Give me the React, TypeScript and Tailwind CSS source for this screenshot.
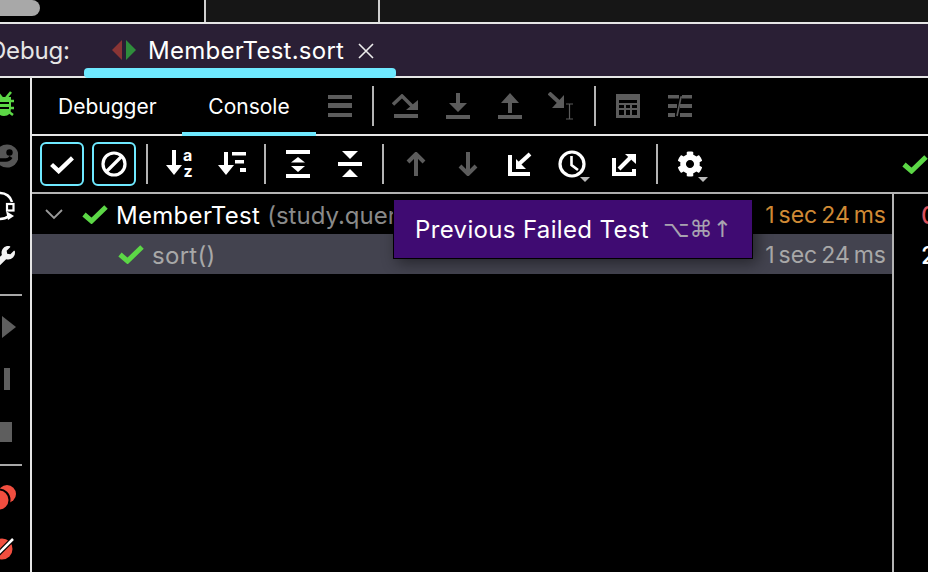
import { FaCog, FaWrench } from 'react-icons/fa';

const GRAY = '#5c5c5c';

function Divider({ className = 'ml-[6px]' }: { className?: string }) {
  return <div className={`h-[40px] w-[2px] shrink-0 bg-[#b4b4b4] ${className}`} />;
}

function Cell({ className = '', children }: { className?: string; children: React.ReactNode }) {
  return <div className={`relative flex h-[52px] w-[52px] shrink-0 items-center justify-center ${className}`}>{children}</div>;
}

function Check({ className = '' }: { className?: string }) {
  return (
    <svg viewBox="0 0 26 20" className={`h-[20px] w-[26px] shrink-0 ${className}`}>
      <path d="M2 10.5 L9.5 17 L24 3" fill="none" stroke="#5cd746" strokeWidth="5" />
    </svg>
  );
}

function Caret() {
  return <span className="absolute left-[34px] top-[39px] h-0 w-0 border-x-[5px] border-t-[5px] border-x-transparent border-t-[#b9b9b9]" />;
}

function RailCell({ children }: { children: React.ReactNode }) {
  return <div className="flex h-[52px] w-full shrink-0 items-center">{children}</div>;
}

function DebugTools() {
  return (
    <div className="ml-[-2px] flex items-center">
      <Cell>
        <svg viewBox="0 0 24 22" className="h-[22px] w-[24px]">
          <path d="M0 0h24v4H0zM0 8h24v5H0zM0 18h24v4H0z" fill={GRAY} />
        </svg>
      </Cell>
      <Divider />
      <Cell className="ml-[5px]">
        <svg viewBox="0 0 26 24" className="h-[24px] w-[26px]">
          <path d="M1 10.5 L10 2 L20 12" fill="none" stroke={GRAY} strokeWidth="3.5" />
          <path d="M26 6 V16 H14Z" fill={GRAY} />
          <path d="M2 20h24v4H2z" fill={GRAY} />
        </svg>
      </Cell>
      <Cell className="ml-[1px]">
        <svg viewBox="0 0 24 26" className="h-[26px] w-[24px]">
          <path d="M10 0h4v10h-4zM3 10h18l-9 9zM0 22h24v4H0z" fill={GRAY} />
        </svg>
      </Cell>
      <Cell>
        <svg viewBox="0 0 24 26" className="h-[26px] w-[24px]">
          <path d="M12 0l9 10H3zM10 10h4v10h-4zM0 22h24v4H0z" fill={GRAY} />
        </svg>
      </Cell>
      <Cell>
        <svg viewBox="0 0 28 28" className="h-[28px] w-[28px]">
          <path d="M1 1 L14 13" fill="none" stroke={GRAY} strokeWidth="4" />
          <path d="M16 3 V16 H4Z" fill={GRAY} />
          <path d="M18 12h7M18 27h7M21.5 12v15" fill="none" stroke={GRAY} strokeWidth="1.2" />
        </svg>
      </Cell>
      <Divider />
      <Cell className="ml-[6px]">
        <svg viewBox="0 0 24 24" className="h-[24px] w-[24px]">
          <path fillRule="evenodd" d="M0 0h24v24H0z M3 6v15h18V6z" fill={GRAY} />
          <path d="M3 9h18v2H3zM3 14h18v2H3zM8 9h2v12H8zM14 9h2v12h-2z" fill={GRAY} />
        </svg>
      </Cell>
      <Cell>
        <svg viewBox="0 0 24 22" className="h-[22px] w-[24px]">
          <path d="M0 0h11v3.5H0zM14 0h10v3.5H14zM0 9h9v4H0zM12 9h12v4H12zM0 18h7v4H0zM12 18h12v4H12z" fill={GRAY} />
          <path d="M9 21 L13 2 H24" fill="none" stroke={GRAY} strokeWidth="1.6" />
        </svg>
      </Cell>
    </div>
  );
}

function TestTools() {
  return (
    <div className="flex h-[56px] shrink-0 items-center overflow-hidden">
      <div className="ml-[8px] flex h-[44px] w-[44px] shrink-0 items-center justify-center rounded-[6px] border-2 border-[#6ee9ff]">
        <svg viewBox="0 0 26 20" className="h-[19px] w-[26px]">
          <path d="M2 10 L9.5 17 L24 3" fill="none" stroke="#fff" strokeWidth="4.5" />
        </svg>
      </div>
      <div className="ml-[8px] flex h-[44px] w-[44px] shrink-0 items-center justify-center rounded-[6px] border-2 border-[#6ee9ff]">
        <svg viewBox="0 0 26 26" className="h-[26px] w-[26px]">
          <circle cx="13" cy="13" r="11" fill="none" stroke="#fff" strokeWidth="3.2" />
          <path d="M5.5 20.5 L20.5 5.5" stroke="#fff" strokeWidth="3.2" />
        </svg>
      </div>
      <Divider className="ml-[10px]" />
      <Cell className="ml-[6px]">
        <svg viewBox="0 0 30 28" className="h-[28px] w-[30px]">
          <path d="M7 0h4v17h-4zM1 15h16l-8 10z" fill="#fff" />
          <text x="18" y="11" fontSize="16" fontWeight="700" fill="#fff" fontFamily="Inter, sans-serif">a</text>
          <text x="18.500" y="27" fontSize="16" fontWeight="700" fill="#fff" fontFamily="Inter, sans-serif">z</text>
        </svg>
      </Cell>
      <Cell>
        <svg viewBox="0 0 28 28" className="h-[28px] w-[28px]">
          <path d="M6 2h4v15h-4zM0 15h16l-8 10z" fill="#fff" />
          <path d="M14 2h14v3.5H14zM17 10h9v3.5h-9zM22 18h6v4h-6z" fill="#fff" />
        </svg>
      </Cell>
      <Divider />
      <Cell className="ml-[6px]">
        <svg viewBox="0 0 24 28" className="h-[28px] w-[24px]">
          <path d="M0 0h24v4H0zM0 24h24v4H0zM12 7l7 5.500H5zM5 16h14l-7 6z" fill="#fff" />
        </svg>
      </Cell>
      <Cell>
        <svg viewBox="0 0 24 26" className="h-[26px] w-[24px]">
          <path d="M0 11h24v4H0zM4 0h16l-8 8zM12 18l8 8H4z" fill="#fff" />
        </svg>
      </Cell>
      <Divider />
      <Cell className="ml-[6px]">
        <svg viewBox="0 0 20 24" className="h-[24px] w-[20px]">
          <path d="M10 2 V24 M2 10 L10 2 L18 10" fill="none" stroke={GRAY} strokeWidth="4" />
        </svg>
      </Cell>
      <Cell>
        <svg viewBox="0 0 20 24" className="h-[24px] w-[20px]">
          <path d="M10 0 V22 M2 14 L10 22 L18 14" fill="none" stroke={GRAY} strokeWidth="4" />
        </svg>
      </Cell>
      <Cell>
        <svg viewBox="0 0 24 24" className="h-[24px] w-[24px]">
          <path d="M2 3 V22 H22" fill="none" stroke="#fff" strokeWidth="4" />
          <path d="M22 2 L11 12" fill="none" stroke="#fff" strokeWidth="4" />
          <path d="M8 7 V17 H18Z" fill="#fff" />
        </svg>
      </Cell>
      <Cell>
        <svg viewBox="0 0 28 28" className="h-[28px] w-[28px]">
          <circle cx="14" cy="14" r="12" fill="none" stroke="#fff" strokeWidth="3.2" />
          <path d="M13.500 6 V15 L20 20" fill="none" stroke="#fff" strokeWidth="2.6" />
        </svg>
        <Caret />
      </Cell>
      <Cell>
        <svg viewBox="0 0 24 24" className="h-[24px] w-[24px]">
          <path d="M2 6 V22 H22 V17" fill="none" stroke="#fff" strokeWidth="4" />
          <path d="M7 17 L18 6" fill="none" stroke="#fff" strokeWidth="4" />
          <path d="M13 2 H24 V12Z" fill="#fff" />
        </svg>
      </Cell>
      <Divider />
      <Cell className="ml-[6px]">
        <FaCog className="h-[26px] w-[26px] text-white" />
        <Caret />
      </Cell>
      <Check className="ml-[186px]" />
    </div>
  );
}

export default function App() {
  return (
    <div className="relative flex h-[572px] w-[928px] flex-col overflow-hidden bg-black font-['Inter',sans-serif] text-white">
      {/* window strip */}
      <div className="flex h-[22px] shrink-0">
        <div className="w-[204px] shrink-0">
          <div className="h-[16px] w-[40px] rounded-r-full bg-[#a8a8a8]" />
        </div>
        <div className="w-[2px] bg-[#cfcfcf]" />
        <div className="w-[172px] bg-[#161616]" />
        <div className="w-[2px] bg-[#cfcfcf]" />
        <div className="flex-1 bg-[#161616]" />
      </div>
      <div className="h-[2px] shrink-0 bg-[#e6e6e6]" />

      {/* debug tabs */}
      <div className="flex h-[52px] shrink-0 items-center bg-[#2a1f35]">
        <span className="ml-[-11px] w-[95px] shrink-0 pt-[2px] text-[24px] leading-none tracking-[-0.2px] text-[#e6e6e6]">Debug:</span>
        <div className="relative flex h-full w-[312px] items-center pl-[28px]">
          <svg viewBox="0 0 24 20" className="h-[20px] w-[24px] shrink-0">
            <path d="M10 0 L0 10 L10 20Z" fill="#8a3535" />
            <path d="M14 0 L24 10 L14 20Z" fill="#2f8d3c" />
          </svg>
          <span className="ml-[12px] pt-[2px] text-[24px] leading-none tracking-[0.25px]">MemberTest.sort</span>
          <svg viewBox="0 0 16 16" className="ml-[14px] mt-[2px] h-[16px] w-[16px]">
            <path d="M1 1 L15 15 M15 1 L1 15" stroke="#ececec" strokeWidth="1.6" />
          </svg>
          <div className="absolute bottom-[-2px] left-0 h-[10px] w-full rounded-[4px] bg-[#6ee9ff]" />
        </div>
      </div>
      <div className="h-[2px] shrink-0 bg-[#e6e6e6]" />

      <div className="flex min-h-0 flex-1">
        {/* left rail */}
        <div className="flex w-[30px] shrink-0 flex-col overflow-hidden">
          <RailCell>
            <svg viewBox="0 0 20 26" className="ml-[-6px] h-[26px] w-[20px] shrink-0">
              <path d="M3 1 L8 7 M17 1 L12 7 M0 10h4 M16 10h4 M0 17h4 M16 17h4 M1 24 L5 21 M19 24 L15 21" stroke="#5cd746" strokeWidth="2.6" />
              <path d="M3 6 H17 V17 Q17 25 10 25 Q3 25 3 17Z" fill="#5cd746" />
              <path d="M2 12h13 M2 17h13" stroke="#000" strokeWidth="2" />
            </svg>
          </RailCell>
          <RailCell>
            <svg viewBox="0 0 24 24" className="ml-[-6px] h-[24px] w-[24px] shrink-0">
              <circle cx="13" cy="12" r="11.500" fill="#565656" />
              <circle cx="15.500" cy="8.500" r="3.200" fill="#000" />
              <path d="M0 16 H12 Q15 16 17 13" fill="none" stroke="#000" strokeWidth="3.500" />
            </svg>
          </RailCell>
          <RailCell>
            <svg viewBox="0 0 16 30" className="mt-[-4px] h-[30px] w-[16px] shrink-0">
              <path d="M0 2 A12 12 0 0 1 12 11 M0 28 Q5 28 9 25" fill="none" stroke="#fff" strokeWidth="2.600" />
              <path d="M6 20 L14 25 L8 29Z" fill="#fff" />
              <rect x="7" y="13" width="6.500" height="6.500" fill="none" stroke="#fff" strokeWidth="2.200" />
            </svg>
          </RailCell>
          <RailCell>
            <FaWrench className="ml-[-9px] mt-[-4px] h-[24px] w-[24px] shrink-0 text-[#f2f2f2]" />
          </RailCell>
          <div className="mt-[8px] h-[2px] w-[22px] shrink-0 bg-[#a8a8a8]" />
          <div className="mt-[5px]" />
          <RailCell>
            <div className="ml-[2px] h-0 w-0 border-y-[11px] border-l-[14px] border-y-transparent border-l-[#5e5e5e]" />
          </RailCell>
          <RailCell>
            <div className="ml-[4px] h-[22px] w-[6px] bg-[#5e5e5e]" />
          </RailCell>
          <RailCell>
            <div className="mt-[1px] h-[20px] w-[12px] bg-[#5e5e5e]" />
          </RailCell>
          <div className="mt-[7px] h-[2px] w-[22px] shrink-0 bg-[#a8a8a8]" />
          <div className="mt-[5px]" />
          <RailCell>
            <svg viewBox="0 0 24 28" className="ml-[-8px] h-[28px] w-[24px] shrink-0">
              <circle cx="15" cy="11" r="9" fill="#f04e3f" />
              <circle cx="7" cy="17" r="10.500" fill="#f04e3f" stroke="#000" strokeWidth="2" />
            </svg>
          </RailCell>
          <RailCell>
            <svg viewBox="0 0 24 24" className="ml-[-8px] h-[24px] w-[24px] shrink-0">
              <circle cx="10" cy="12" r="10.500" fill="#f04e3f" />
              <path d="M0 23 L21 2" stroke="#000" strokeWidth="5" />
              <path d="M0 23 L21 2" stroke="#fff" strokeWidth="2.500" />
            </svg>
          </RailCell>
        </div>
        <div className="w-[2px] shrink-0 bg-[#e6e6e6]" />

        {/* main area */}
        <div className="flex min-w-0 flex-1 flex-col overflow-hidden">
          <div className="relative flex h-[56px] shrink-0 items-center">
            <span className="ml-[26px] w-[124px] shrink-0 text-[21px] leading-none">Debugger</span>
            <div className="relative flex h-[58px] w-[134px] shrink-0 items-center justify-center self-start pb-[2px]">
              <span className="text-[21px] leading-none">Console</span>
              <div className="absolute bottom-0 left-0 h-[4px] w-full bg-[#6ee9ff]" />
            </div>
            <DebugTools />
          </div>
          <div className="h-[2px] shrink-0 bg-[#e6e6e6]" />
          <TestTools />
          <div className="h-[2px] shrink-0 bg-[#b4b4b4]" />

          <div className="flex min-h-0 flex-1">
            <div className="w-[860px] shrink-0">
              <div className="flex h-[40px] items-center">
                <svg viewBox="0 0 18 11" className="ml-[13px] h-[11px] w-[18px] shrink-0">
                  <path d="M1 1 L9 9 L17 1" fill="none" stroke="#9a9a9a" strokeWidth="1.800" />
                </svg>
                <Check className="ml-[19px]" />
                <span className="ml-[8px] whitespace-nowrap pt-[3px] text-[24px] leading-none tracking-[0.3px]">MemberTest</span>
                <span className="ml-[7px] whitespace-nowrap pt-[3px] text-[24px] leading-none text-[#8a8a8a]">(study.query)</span>
                <span className="ml-auto mr-[6px] pt-[3px] text-[23px] leading-none text-[#d08a35] [word-spacing:-2.500px]">1 sec 24 ms</span>
              </div>
              <div className="flex h-[40px] items-center bg-[#43434f]">
                <Check className="ml-[86px]" />
                <span className="ml-[8px] pt-[3px] text-[24px] leading-none tracking-[0.3px] text-[#a8a8a8]">sort()</span>
                <span className="ml-auto mr-[6px] pt-[3px] text-[23px] leading-none text-[#a8a8a8] [word-spacing:-2.500px]">1 sec 24 ms</span>
              </div>
            </div>
            <div className="w-[2px] shrink-0 bg-[#b4b4b4]" />
            <div className="min-w-0 flex-1 pl-[27px] font-medium">
              <div className="flex h-[40px] items-center pt-[3px] text-[24px] leading-none text-[#d9505c]">0</div>
              <div className="flex h-[40px] items-center pt-[3px] text-[24px] leading-none">2</div>
            </div>
          </div>
        </div>
      </div>

      {/* tooltip */}
      <div className="absolute left-[393px] top-[199px] flex h-[60px] w-[360px] items-center border border-black bg-[#3f0b72] pl-[21px] shadow-[4px_4px_14px_rgba(0,0,0,0.45)]">
        <span className="whitespace-nowrap pt-[1px] text-[24px] leading-none tracking-[0.35px]">Previous Failed Test</span>
        <span className="ml-[14px] whitespace-nowrap font-['DejaVu_Sans',sans-serif] text-[23px] leading-none text-[#a8a3b0]">⌥⌘↑</span>
      </div>
    </div>
  );
}
